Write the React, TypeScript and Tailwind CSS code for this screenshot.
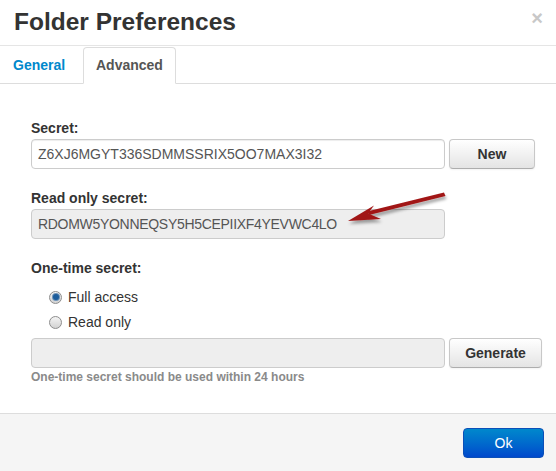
import React from 'react';

const font = { fontFamily: '"Liberation Sans", Arial, sans-serif' };

const Radio: React.FC<{ checked?: boolean; label: string }> = ({ checked, label }) => (
  <div className="flex items-center h-5 leading-5">
    <span className="ml-[18px] w-[13px] h-[13px] rounded-full border border-[#8d8d8d] bg-gradient-to-b from-[#f4f4f4] to-[#d2d2d2] flex items-center justify-center">
      {checked && <span className="w-[6px] h-[6px] rounded-full bg-[#1c5d9c] ring-1 ring-[#6e93b8]" />}
    </span>
    <span className="ml-[6px] text-[14px] text-[#333]">{label}</span>
  </div>
);

const GrayButton: React.FC<{ label: string; width: string }> = ({ label, width }) => (
  <button
    className={`ml-[4px] h-[30px] ${width} rounded-[4px] border border-[#c8c8c8] border-b-[#adadad] bg-gradient-to-b from-white to-[#e4e4e4] text-[14px] font-bold text-[#333] shadow-[inset_0_1px_0_rgba(255,255,255,0.3),0_1px_2px_rgba(0,0,0,0.05)]`}
  >
    {label}
  </button>
);

const Arrow = () => (
  <svg className="absolute left-0 top-0 pointer-events-none" width="556" height="471">
    <defs>
      <filter id="sh" x="-20%" y="-50%" width="140%" height="200%">
        <feDropShadow dx="1" dy="3" stdDeviation="1.6" floodColor="#000" floodOpacity="0.35" />
      </filter>
    </defs>
    <g filter="url(#sh)" fill="#a11616">
      <polygon points="444,192.5 445.5,196 369,215 367,211.5" />
      <polygon points="348,221 374,205.5 368,213.5 381,219" />
    </g>
  </svg>
);

export default function App() {
  return (
    <div style={font} className="relative w-[556px] h-[471px] bg-white overflow-hidden flex flex-col">
      <div className="h-[46px] shrink-0 border-b border-[#e5e5e5] flex justify-between items-start pl-[14px] pr-[13px]">
        <h1 className="mt-[7px] text-[24.5px] leading-[30px] font-bold text-[#333]">Folder Preferences</h1>
        <span className="mt-[8px] text-[20px] leading-[20px] font-bold text-[#c8c8c8]">×</span>
      </div>

      <div className="shrink-0 flex border-b border-[#ddd]">
        <div className="mt-[1px] -mb-px w-[81px] pl-3 pt-[7px] pb-[8px] leading-5 border border-transparent text-[14px] font-bold text-[#0088cc]">
          General
        </div>
        <div className="mt-[1px] -mb-px ml-[2px] px-3 pt-[7px] pb-[8px] leading-5 border border-[#ddd] border-b-white bg-white rounded-t-[4px] text-[14px] font-bold text-[#555]">
          Advanced
        </div>
      </div>

      <div className="flex-1 pl-[31px] pt-[34px]">
        <div className="text-[14px] leading-5 font-bold text-[#333] mb-px">Secret:</div>
        <div className="flex">
          <div className="w-[414px] h-[30px] rounded-[4px] border border-[#ccc] bg-white px-[6px] flex items-center text-[14px] text-[#555] shadow-[inset_0_1px_1px_rgba(0,0,0,0.075)]">
            Z6XJ6MGYT336SDMMSSRIX5OO7MAX3I32
          </div>
          <GrayButton label="New" width="w-[86px]" />
        </div>

        <div className="mt-[19px] text-[14px] leading-5 font-bold text-[#333] mb-px">Read only secret:</div>
        <div className="w-[414px] h-[30px] rounded-[4px] border border-[#ccc] bg-[#eee] px-[6px] flex items-center text-[14px] tracking-[-0.3px] text-[#555]">
          RDOMW5YONNEQSY5H5CEPIIXF4YEVWC4LO
        </div>

        <div className="mt-[19px] text-[14px] leading-5 font-bold text-[#333]">One-time secret:</div>
        <div className="mt-[9px] flex flex-col gap-[5px]">
          <Radio checked label="Full access" />
          <Radio label="Read only" />
        </div>
        <div className="mt-[6px] flex">
          <div className="w-[414px] h-[30px] rounded-[4px] border border-[#ccc] bg-[#eee]" />
          <GrayButton label="Generate" width="w-[93px]" />
        </div>
        <div className="text-[12px] leading-[18px] font-bold text-[#8a8a8a]">
          One-time secret should be used within 24 hours
        </div>
      </div>

      <div className="h-[58px] shrink-0 border-t border-[#ddd] bg-[#f5f5f5] flex justify-end items-start pt-[14px] pr-[12px]">
        <button className="w-[81px] h-[30px] rounded-[4px] border border-[#0b4fb8] bg-gradient-to-b from-[#0088cc] to-[#0048cc] text-[14px] text-white">
          Ok
        </button>
      </div>

      <Arrow />
    </div>
  );
}
